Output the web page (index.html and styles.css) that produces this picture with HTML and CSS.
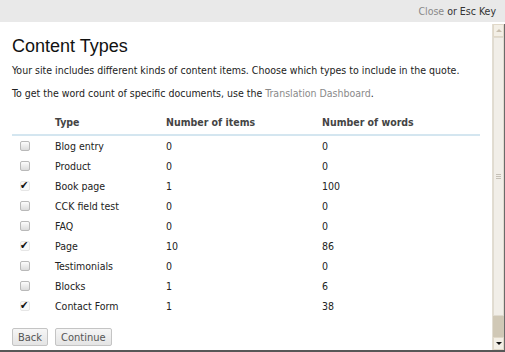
FILE: index.html
```html
<!DOCTYPE html>
<html lang="en">
<head>
    <meta charset="UTF-8" />
    <title>Content Types</title>
    <link rel="stylesheet" href="styles.css">
</head>
<body>
    <div class="topbar">
        <a class="close" href="#">Close</a> or Esc Key
    </div>
    <div class="frame">
        <div class="content">
            <h2>Content Types</h2>
            <p>Your site includes different kinds of content items. Choose which types to include in the quote.</p>
            <p>To get the word count of specific documents, use the <a href="#">Translation Dashboard</a>.</p>

            <table>
                <thead>
                    <tr>
                        <th class="col-check"></th>
                        <th class="col-type">Type</th>
                        <th class="col-items">Number of items</th>
                        <th>Number of words</th>
                    </tr>
                </thead>
                <tbody>
                    <tr><td><span class="cb"></span></td><td>Blog entry</td><td>0</td><td>0</td></tr>
                    <tr><td><span class="cb"></span></td><td>Product</td><td>0</td><td>0</td></tr>
                    <tr><td><span class="cb checked">&#10004;</span></td><td>Book page</td><td>1</td><td>100</td></tr>
                    <tr><td><span class="cb"></span></td><td>CCK field test</td><td>0</td><td>0</td></tr>
                    <tr><td><span class="cb"></span></td><td>FAQ</td><td>0</td><td>0</td></tr>
                    <tr><td><span class="cb checked">&#10004;</span></td><td>Page</td><td>10</td><td>86</td></tr>
                    <tr><td><span class="cb"></span></td><td>Testimonials</td><td>0</td><td>0</td></tr>
                    <tr><td><span class="cb"></span></td><td>Blocks</td><td>1</td><td>6</td></tr>
                    <tr><td><span class="cb checked">&#10004;</span></td><td>Contact Form</td><td>1</td><td>38</td></tr>
                </tbody>
            </table>

            <div class="buttons">
                <button>Back</button>
                <button>Continue</button>
            </div>
        </div>
        <div class="scrollbar">
            <div class="arrow up"></div>
            <div class="thumb"><span class="grip"></span></div>
            <div class="track"></div>
            <div class="arrow down"></div>
        </div>
    </div>
</body>
</html>
```

FILE: styles.css
```css
body {
    margin: 0;
    width: 505px;
    height: 352px;
    overflow: hidden;
    background: #fff;
    color: #222;
    font-family: 'DejaVu Sans Condensed', 'DejaVu Sans', Verdana, sans-serif;
    font-size: 10.5px;
}

a {
    color: #8a8a8a;
    text-decoration: none;
}

.topbar {
    height: 22px;
    line-height: 22px;
    background: #e9e9e9;
    text-align: right;
    padding-right: 9px;
    color: #333;
}

.frame {
    display: flex;
    height: 328px;
    border-bottom: 2px solid #575757;
}

.content {
    flex: 1;
    padding: 0 12px;
}

h2 {
    font-family: 'Liberation Sans', Arial, sans-serif;
    font-weight: normal;
    font-size: 18px;
    color: #111;
    margin: 14px 0 7px;
}

p {
    margin: 0 0 10px;
    line-height: 13px;
}

table {
    width: 468px;
    border-collapse: collapse;
    margin-top: 6px;
}

th {
    text-align: left;
    font-weight: bold;
    color: #444;
    height: 20px;
    padding: 2px 0 2px;
    border-bottom: 2px solid #d4e6f0;
}

td {
    height: 20px;
    padding: 0;
    color: #222;
}

.col-check { width: 43px; }
.col-type { width: 111px; }
.col-items { width: 156px; }

.cb {
    display: block;
    box-sizing: border-box;
    width: 10px;
    height: 10px;
    margin-left: 8px;
    border: 1px solid #b9b9b9;
    border-radius: 2px;
    background: linear-gradient(#fdfdfd, #dcdcdc);
}

.cb.checked {
    border-color: #e6e6e6;
    background: #f8f8f8;
    color: #111;
    font-size: 11px;
    line-height: 8px;
    text-indent: -1px;
}

.buttons {
    margin-top: 12px;
    display: flex;
    gap: 7px;
}

button {
    font-family: 'DejaVu Sans Condensed', 'DejaVu Sans', Verdana, sans-serif;
    font-size: 11px;
    color: #555;
    height: 18px;
    padding: 0 5px;
    background: linear-gradient(#f6f6f6, #e4e4e4);
    border: 1px solid #c4c4c4;
    border-radius: 2px;
}

.scrollbar {
    width: 11px;
    margin: 2px 0 0;
    display: flex;
    flex-direction: column;
    border-left: 1px solid #e2ddd2;
    border-right: 1px solid #6a6a6a;
    background: #f3f1ec;
}

.arrow {
    height: 11px;
    display: flex;
    align-items: center;
    justify-content: center;
    background: #f3efe6;
    border: 1px solid #e0d8c8;
}

.arrow.up::before {
    content: '';
    border: 3px solid transparent;
    border-bottom: 3px solid #c9bfae;
    border-top: 0;
}

.arrow.down::before {
    content: '';
    border: 3px solid transparent;
    border-top: 3px solid #111;
    border-bottom: 0;
}

.thumb {
    flex: 1;
    display: flex;
    align-items: center;
    justify-content: center;
    background: #f1eee8;
    border: 1px solid #e0dbd0;
}

.grip {
    width: 5px;
    height: 5px;
    background: repeating-linear-gradient(#c5c0b6 0 1px, transparent 1px 2px);
}

.track {
    height: 21px;
    background: #d0c8b6;
}
```
